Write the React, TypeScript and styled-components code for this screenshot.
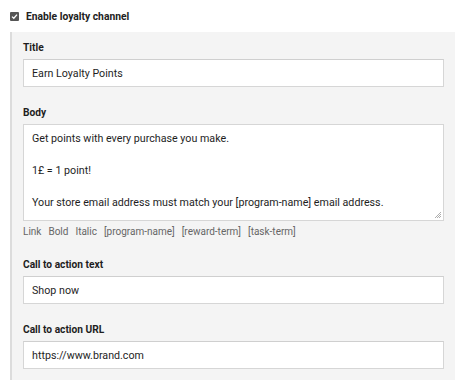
import React from "react";
import styled, { createGlobalStyle } from "styled-components";

const Global = createGlobalStyle`
  html, body { margin: 0; padding: 0; background: #ffffff; }
  body { font-family: Roboto, "Liberation Sans", Arial, sans-serif; color: #222; }
  * { box-sizing: border-box; }
`;

const Page = styled.div`
  width: 468px;
  height: 390px;
  padding: 8px 0 0 10px;
  display: flex;
  flex-direction: column;
  align-items: flex-start;
`;

const ToggleRow = styled.label`
  display: flex;
  align-items: center;
  gap: 7px;
  height: 16px;
  font-size: 10.3px;
  font-weight: 700;
  color: #222;
`;

const Check = styled.span`
  width: 9px;
  height: 9px;
  border-radius: 1px;
  background: #555;
  display: flex;
  align-items: center;
  justify-content: center;
`;

const Panel = styled.div`
  margin-top: 8px;
  width: 445px;
  background: #f4f4f4;
  border-left: 2px solid #dcdcdc;
  padding: 9px 11px 11px 11px;
  display: flex;
  flex-direction: column;
  gap: 19px;
`;

const Field = styled.div`
  display: flex;
  flex-direction: column;
`;

const Label = styled.div`
  font-size: 10.2px;
  font-weight: 700;
  line-height: 14px;
  color: #1e1e1e;
  margin-bottom: 4px;
`;

const Input = styled.div`
  height: 28px;
  background: #fff;
  border: 1px solid #d6d6d6;
  border-top-color: #cfcfcf;
  padding: 0 8px;
  display: flex;
  align-items: center;
  font-size: 10.7px;
  color: #1e1e1e;
`;

const TextArea = styled.div`
  position: relative;
  height: 97px;
  background: #fff;
  border: 1px solid #d6d6d6;
  padding: 6px 8px;
  font-size: 10.7px;
  line-height: 16px;
  color: #1e1e1e;
  white-space: pre-wrap;
`;

const Grip = styled.svg`
  position: absolute;
  right: 1px;
  bottom: 1px;
`;

const Toolbar = styled.div`
  display: flex;
  gap: 7px;
  margin-top: 4px;
  font-size: 10px;
  line-height: 14px;
  color: #666;
`;

const bodyText =
  "Get points with every purchase you make.\n\n1£ = 1 point!\n\nYour store email address must match your [program-name] email address.";

export default function App() {
  return (
    <>
      <Global />
      <Page>
        <ToggleRow>
          <Check>
            <svg width="7" height="7" viewBox="0 0 7 7">
              <path d="M1 3.6 L2.8 5.3 L6 1.6" stroke="#fff" strokeWidth="1.3" fill="none" />
            </svg>
          </Check>
          Enable loyalty channel
        </ToggleRow>
        <Panel>
          <Field>
            <Label>Title</Label>
            <Input>Earn Loyalty Points</Input>
          </Field>
          <Field>
            <Label>Body</Label>
            <TextArea>
              {bodyText}
              <Grip width="9" height="9" viewBox="0 0 9 9">
                <path d="M8 2 L2 8 M8 4 L4 8 M8 6 L6 8" stroke="#999" strokeWidth="0.8" />
              </Grip>
            </TextArea>
            <Toolbar>
              <span>Link</span>
              <span>Bold</span>
              <span>Italic</span>
              <span>[program-name]</span>
              <span>[reward-term]</span>
              <span>[task-term]</span>
            </Toolbar>
          </Field>
          <Field>
            <Label>Call to action text</Label>
            <Input>Shop now</Input>
          </Field>
          <Field>
            <Label>Call to action URL</Label>
            <Input>https://www.brand.com</Input>
          </Field>
        </Panel>
      </Page>
    </>
  );
}
